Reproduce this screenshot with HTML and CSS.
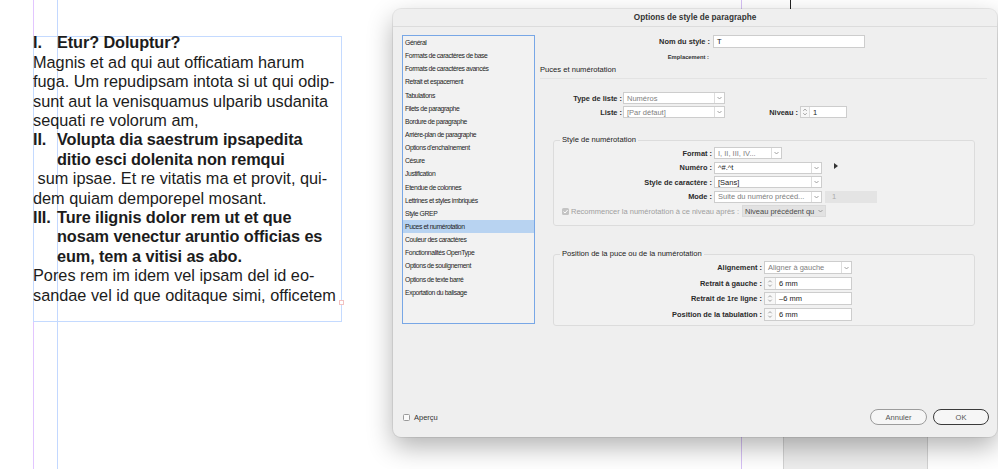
FILE: index.html
```html
<!DOCTYPE html>
<html lang="fr">
<head>
<meta charset="utf-8">
<title>Options de style de paragraphe</title>
<link rel="stylesheet" href="styles.css">
</head>
<body>
<div class="canvas">
  <div class="guide guide-margin"></div>
  <div class="guide guide-column"></div>
  <div class="guide guide-purple2"></div>
  <div class="page-line-top"></div>
  <div class="side-box"></div>
  <div class="text-frame"><span class="outport"></span></div>
  <div class="story">
    <div class="item bold"><span class="num">I.</span><span>Etur? Doluptur?</span></div>
    <div class="line">Magnis et ad qui aut officatiam harum</div>
    <div class="line">fuga. Um repudipsam intota si ut qui odip-</div>
    <div class="line">sunt aut la venisquamus ulparib usdanita</div>
    <div class="line">sequati re volorum am,</div>
    <div class="item bold"><span class="num">II.</span><span>Volupta dia saestrum ipsapedita</span></div>
    <div class="line bold cont">ditio esci dolenita non remqui</div>
    <div class="line"> sum ipsae. Et re vitatis ma et provit, qui-</div>
    <div class="line">dem quiam demporepel mosant.</div>
    <div class="item bold"><span class="num">III.</span><span>Ture ilignis dolor rem ut et que</span></div>
    <div class="line bold cont">nosam venectur aruntio officias es</div>
    <div class="line bold cont">eum, tem a vitisi as abo.</div>
    <div class="line">Pores rem im idem vel ipsam del id eo-</div>
    <div class="line">sandae vel id que oditaque simi, officetem</div>
  </div>
</div>

<section class="dialog">
  <header class="titlebar">Options de style de paragraphe</header>
  <div class="dialog-body">
    <ul class="category-list">
      <li>Général</li>
      <li>Formats de caractères de base</li>
      <li>Formats de caractères avancés</li>
      <li>Retrait et espacement</li>
      <li>Tabulations</li>
      <li>Filets de paragraphe</li>
      <li>Bordure de paragraphe</li>
      <li>Arrière-plan de paragraphe</li>
      <li>Options d'enchaînement</li>
      <li>Césure</li>
      <li>Justification</li>
      <li>Etendue de colonnes</li>
      <li>Lettrines et styles imbriqués</li>
      <li>Style GREP</li>
      <li class="selected">Puces et numérotation</li>
      <li>Couleur des caractères</li>
      <li>Fonctionnalités OpenType</li>
      <li>Options de soulignement</li>
      <li>Options de texte barré</li>
      <li>Exportation du balisage</li>
    </ul>

    <div class="panel">
      <div class="row row-name">
        <span class="lbl w-name">Nom du style :</span>
        <div class="field text-input w-name-input"><span class="val dark">T</span></div>
      </div>
      <div class="row-loc"><span class="lbl-small">Emplacement :</span></div>
      <div class="section-title">Puces et numérotation</div>
      <div class="separator"></div>

      <div class="row r12 mt-13">
        <span class="lbl w-list">Type de liste :</span>
        <div class="field select w-list-sel"><span class="val">Numéros</span><span class="caret"><svg width="9" height="10" viewBox="0 0 9 10"><path d="M2.5 4 L4.5 6 L6.5 4" fill="none" stroke="#8a8a8a" stroke-width="0.8"/></svg></span></div>
      </div>
      <div class="row r12 mt-2">
        <span class="lbl w-list">Liste :</span>
        <div class="field select w-list-sel"><span class="val">[Par défaut]</span><span class="caret"><svg width="9" height="10" viewBox="0 0 9 10"><path d="M2.5 4 L4.5 6 L6.5 4" fill="none" stroke="#8a8a8a" stroke-width="0.8"/></svg></span></div>
        <span class="lbl w-niveau">Niveau :</span>
        <div class="field spin w-niveau-field"><span class="spinner"><svg width="8" height="10" viewBox="0 0 8 10"><path d="M2.3 3.8 L4 2.1 L5.7 3.8 M2.3 6.2 L4 7.9 L5.7 6.2" fill="none" stroke="#8a8a8a" stroke-width="0.8"/></svg></span><span class="val dark">1</span></div>
      </div>

      <fieldset class="group group-1">
        <legend>Style de numérotation</legend>
        <div class="row r12">
          <span class="lbl w-g1">Format :</span>
          <div class="field select w-format"><span class="val">I, II, III, IV...</span><span class="caret"><svg width="9" height="10" viewBox="0 0 9 10"><path d="M2.5 4 L4.5 6 L6.5 4" fill="none" stroke="#8a8a8a" stroke-width="0.8"/></svg></span></div>
        </div>
        <div class="row r12 mt-25">
          <span class="lbl w-g1">Numéro :</span>
          <div class="field select w-g1-sel"><span class="val dark">^#.^t</span><span class="caret"><svg width="9" height="10" viewBox="0 0 9 10"><path d="M2.5 4 L4.5 6 L6.5 4" fill="none" stroke="#8a8a8a" stroke-width="0.8"/></svg></span></div>
          <svg class="flyout" width="4" height="6" viewBox="0 0 4 6"><path d="M0 0 L4 3 L0 6Z" fill="#333"/></svg>
        </div>
        <div class="row r12 mt-25">
          <span class="lbl w-g1">Style de caractère :</span>
          <div class="field select w-g1-sel"><span class="val dark">[Sans]</span><span class="caret"><svg width="9" height="10" viewBox="0 0 9 10"><path d="M2.5 4 L4.5 6 L6.5 4" fill="none" stroke="#8a8a8a" stroke-width="0.8"/></svg></span></div>
        </div>
        <div class="row r12 mt-25">
          <span class="lbl w-g1">Mode :</span>
          <div class="field select w-g1-sel"><span class="val">Suite du numéro précéd...</span><span class="caret"><svg width="9" height="10" viewBox="0 0 9 10"><path d="M2.5 4 L4.5 6 L6.5 4" fill="none" stroke="#8a8a8a" stroke-width="0.8"/></svg></span></div>
          <div class="field disabled w-mode-num"><span class="val faint">1</span></div>
        </div>
        <div class="row r12 mt-25">
          <span class="checkbox checked"><svg width="7" height="7" viewBox="0 0 7 7"><path d="M1.5 3.6 L3 5 L5.6 2" fill="none" stroke="#fff" stroke-width="1"/></svg></span>
          <span class="chk-label">Recommencer la numérotation à ce niveau après :</span>
          <div class="field select disabled-select w-restart"><span class="val mid">Niveau précédent qu</span><span class="caret plain"><svg width="9" height="10" viewBox="0 0 9 10"><path d="M2.5 4 L4.5 6 L6.5 4" fill="none" stroke="#8a8a8a" stroke-width="0.8"/></svg></span></div>
        </div>
      </fieldset>

      <fieldset class="group group-2">
        <legend>Position de la puce ou de la numérotation</legend>
        <div class="row r13">
          <span class="lbl w-g2">Alignement :</span>
          <div class="field select w-g2"><span class="val">Aligner à gauche</span><span class="caret"><svg width="9" height="10" viewBox="0 0 9 10"><path d="M2.5 4 L4.5 6 L6.5 4" fill="none" stroke="#8a8a8a" stroke-width="0.8"/></svg></span></div>
        </div>
        <div class="row r13 mt-25">
          <span class="lbl w-g2">Retrait à gauche :</span>
          <div class="field spin w-g2"><span class="spinner"><svg width="10" height="11" viewBox="0 0 10 11"><path d="M3.3 4.3 L5 2.6 L6.7 4.3 M3.3 6.7 L5 8.4 L6.7 6.7" fill="none" stroke="#8a8a8a" stroke-width="0.8"/></svg></span><span class="val dark">6 mm</span></div>
        </div>
        <div class="row r13 mt-25">
          <span class="lbl w-g2">Retrait de 1re ligne :</span>
          <div class="field spin w-g2"><span class="spinner"><svg width="10" height="11" viewBox="0 0 10 11"><path d="M3.3 4.3 L5 2.6 L6.7 4.3 M3.3 6.7 L5 8.4 L6.7 6.7" fill="none" stroke="#8a8a8a" stroke-width="0.8"/></svg></span><span class="val dark">–6 mm</span></div>
        </div>
        <div class="row r13 mt-25">
          <span class="lbl w-g2">Position de la tabulation :</span>
          <div class="field spin w-g2"><span class="spinner"><svg width="10" height="11" viewBox="0 0 10 11"><path d="M3.3 4.3 L5 2.6 L6.7 4.3 M3.3 6.7 L5 8.4 L6.7 6.7" fill="none" stroke="#8a8a8a" stroke-width="0.8"/></svg></span><span class="val dark">6 mm</span></div>
        </div>
      </fieldset>
    </div>
  </div>

  <footer class="footer">
    <span class="checkbox empty"></span>
    <span class="preview-label">Aperçu</span>
    <span class="spacer"></span>
    <button class="btn btn-cancel">Annuler</button>
    <button class="btn btn-ok">OK</button>
  </footer>
</section>
</body>
</html>
```

FILE: styles.css
```css
* { box-sizing: border-box; }
html, body { margin: 0; padding: 0; }
body {
  width: 998px;
  height: 469px;
  overflow: hidden;
  background: #ffffff;
  position: relative;
  font-family: "Liberation Sans", Arial, sans-serif;
}

/* ---------- page canvas (InDesign layout) ---------- */
.canvas { position: absolute; inset: 0; }
.guide { position: absolute; top: 0; bottom: 0; width: 1px; }
.guide-margin { left: 33px; background: #e2c6ff; }
.guide-column { left: 57px; background: #c3d8ff; }
.guide-purple2 { left: 741px; background: #d6c0f5; }
.page-line-top { position: absolute; left: 790px; top: 0; width: 1px; height: 20px; background: #222; }
.side-box {
  position: absolute; left: 783px; top: 300px; width: 145px; bottom: 0;
  background: #ededed; border-left: 1px solid #d2d2d2; border-right: 1px solid #d2d2d2;
}
.text-frame {
  position: absolute; left: 33px; top: 36px; width: 309px; height: 286px;
  border: 1px solid #c4daff;
}
.outport {
  position: absolute; right: -3px; top: 263px; width: 5px; height: 5px;
  border: 1px solid #f2c2c2; background: #fff;
}
.story {
  position: absolute; left: 33px; top: 33.3px; width: 330px;
  font-size: 16.3px; line-height: 19.4px; color: #1c1c1c;
}
.story .line { white-space: pre; }
.story .bold { font-weight: bold; letter-spacing: -0.1px; }
.story .item { display: flex; white-space: pre; }
.story .num { width: 24px; flex: none; }
.story .cont { padding-left: 24px; }

/* ---------- dialog ---------- */
.dialog {
  position: absolute; left: 393px; top: 9px; width: 604px; height: 428px;
  background: #efefef; border-radius: 8px;
  box-shadow: 0 10px 26px rgba(0,0,0,0.30), 0 0 0 1px rgba(0,0,0,0.07);
  display: flex; flex-direction: column; overflow: hidden;
  color: #2a2a2a;
}
.titlebar {
  height: 18px; flex: none; border-bottom: 1px solid #dcdcdc;
  text-align: center; font-weight: bold; font-size: 8.2px; line-height: 17px; color: #333;
}
.dialog-body { display: flex; padding: 8px 10px 0 9px; flex: none; }

.category-list {
  width: 133px; height: 289px; margin: 0; padding: 0; list-style: none; flex: none;
  border: 1px solid #78a7e6; background: #f2f2f2;
  font-size: 6.8px; letter-spacing: -0.4px; color: #1e1e1e;
}
.category-list li { height: 13.15px; line-height: 13.15px; padding-left: 2px; white-space: nowrap; }
.category-list li.selected { background: #b8d3f1; }

.panel { margin-left: 5px; width: 447px; flex: none; }
.row { display: flex; align-items: center; }
.r12 { height: 12px; }
.r13 { height: 13px; }
.mt-2 { margin-top: 2px; }
.mt-25 { margin-top: 2.5px; }
.mt-13 { margin-top: 13px; }

.lbl {
  flex: none; text-align: right; font-weight: bold; font-size: 7.4px;
  color: #2b2b2b; white-space: nowrap;
}
.w-name { width: 170px; margin-right: 3px; }
.w-list { width: 82px; margin-right: 1px; }
.w-niveau { width: 30px; margin-left: 43px; margin-right: 2px; }
.w-g1 { width: 158px; margin-right: 2px; }
.lbl.w-g2 { width: 208px; margin-right: 2px; }
.field.w-g2 { width: 88px; }

.row-name { height: 13px; }
.row-loc { margin-top: 5px; height: 8px; line-height: 8px; }
.lbl-small {
  display: block; width: 169px; text-align: right; font-weight: bold;
  font-size: 5.8px; color: #333;
}
.section-title { margin-top: 4px; height: 10px; line-height: 10px; font-size: 7.6px; color: #222; }
.separator { margin-top: 3px; height: 1px; background: #e3e3e3; }

/* fields */
.field {
  display: flex; align-items: stretch; height: 100%; flex: none;
  border: 1px solid #cdcdcd; background: #ffffff; overflow: hidden;
  font-size: 7.5px;
}
.field .val {
  flex: 1; padding-left: 3px; white-space: nowrap; overflow: hidden;
  display: flex; align-items: center; color: #808080;
}
.field .val.dark { color: #222; }
.field .val.faint { color: #ababab; padding-left: 6px; }
.field .val.mid { color: #4a4a4a; }
.caret {
  width: 10px; flex: none; border-left: 1px solid #dddddd;
  display: flex; align-items: center; justify-content: center;
}
.caret.plain { border-left: none; width: 9px; }
.spinner {
  width: 11px; flex: none; border-right: 1px solid #dddddd; background: #f7f7f7;
  display: flex; align-items: center; justify-content: center;
}
.w-name-input { width: 152px; }
.w-list-sel { width: 102px; }
.w-niveau-field { width: 47px; }
.w-niveau-field .spinner { width: 9px; }
.w-format { width: 68px; }
.w-g1-sel { width: 108px; }
.w-mode-num { width: 52px; margin-left: 3px; background: #e4e4e4; border-color: #e4e4e4; }
.w-restart { width: 84px; margin-left: 3px; }
.w-restart .val { padding-left: 2px; }
.disabled-select { background: #e2e2e2; border-color: #dadada; }
.flyout { margin-left: 12px; margin-top: -4px; }

/* group boxes */
.group {
  margin: 0 0 0 13px; width: 422px; min-width: 0;
  border: 1px solid #dcdcdc; border-radius: 3px; background: #f1f1f1;
}
.group legend {
  padding: 0 2px; margin-left: 6px; height: 10px; line-height: 10px;
  font-size: 7.6px; color: #222;
}
.group-1 { margin-top: 17px; padding: 2px 0 8px 0; }
.group-2 { margin-top: 23px; padding: 2px 0 4px 0; }

.checkbox {
  width: 7px; height: 7px; flex: none; border-radius: 1.5px;
  display: flex; align-items: center; justify-content: center;
}
.checkbox.checked { background: #c4c4c4; margin-left: 8px; }
.checkbox.empty { border: 1px solid #9a9a9a; background: #fafafa; }
.chk-label { margin-left: 2px; font-size: 7.5px; color: #a0a0a0; white-space: nowrap; }

/* footer */
.footer {
  margin-top: auto; flex: none; display: flex; align-items: center;
  height: 28px; padding: 0 8px 12px 10px;
}
.preview-label { margin-left: 4px; font-size: 7.5px; color: #333; }
.spacer { flex: 1; }
.btn {
  height: 16px; border-radius: 8px; background: #f6f6f6;
  font-family: "Liberation Sans", Arial, sans-serif; font-size: 7.5px; color: #555;
  padding: 0; margin: 0;
}
.btn-cancel { width: 57px; border: 1px solid #9c9c9c; }
.btn-ok { width: 56px; margin-left: 6px; border: 1.5px solid #3a3a3a; }
```
